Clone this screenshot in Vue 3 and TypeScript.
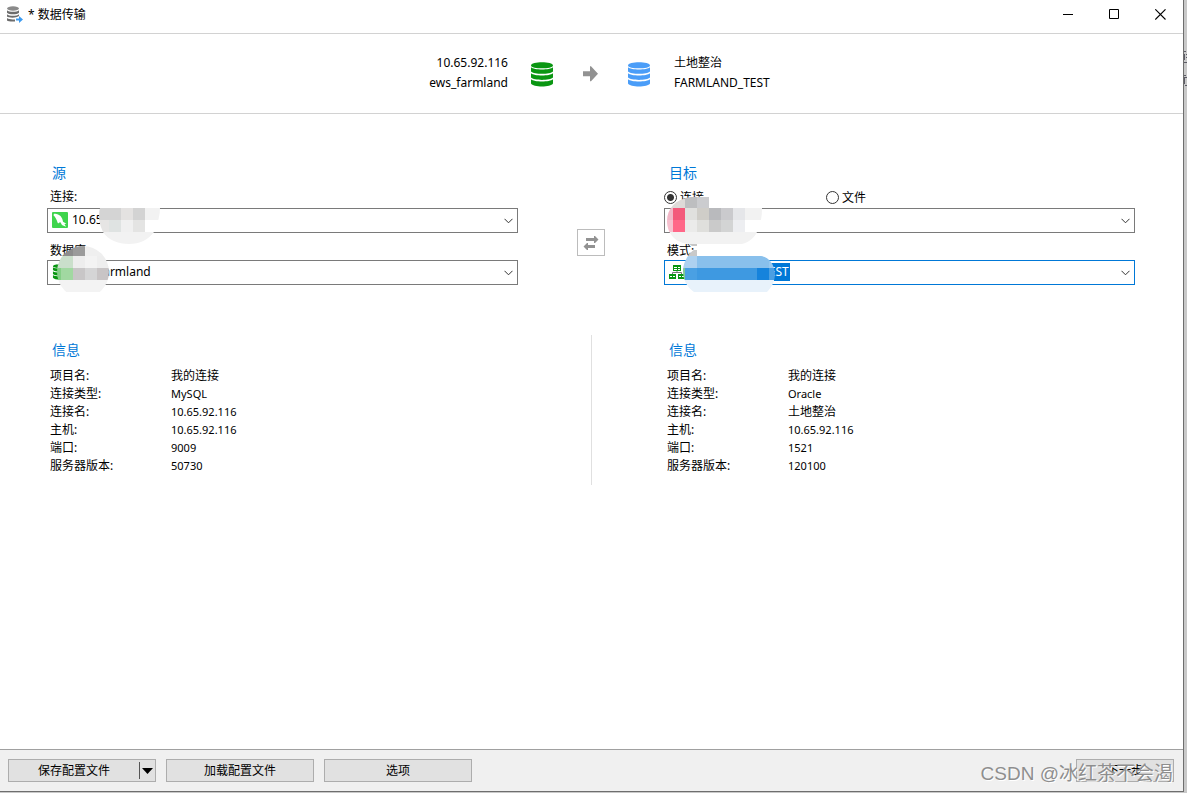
<script setup lang="ts">
import { ref } from 'vue'

interface Tile { x: number; y: number; w: number; h: number; c: string }
interface InfoRow { label: string; value: string; cjk?: boolean }

const tile = (x: number, y: number, w: number, h: number, c: string): Tile => ({ x, y, w, h, c })

const sourceInfo: InfoRow[] = [
  { label: '项目名:', value: '我的连接', cjk: true },
  { label: '连接类型:', value: 'MySQL' },
  { label: '连接名:', value: '10.65.92.116' },
  { label: '主机:', value: '10.65.92.116' },
  { label: '端口:', value: '9009' },
  { label: '服务器版本:', value: '50730' },
]
const targetInfo: InfoRow[] = [
  { label: '项目名:', value: '我的连接', cjk: true },
  { label: '连接类型:', value: 'Oracle' },
  { label: '连接名:', value: '土地整治', cjk: true },
  { label: '主机:', value: '10.65.92.116' },
  { label: '端口:', value: '1521' },
  { label: '服务器版本:', value: '120100' },
]

const maskConnection: Tile[] = [
  tile(0, 0, 22, 12, '#d4d4d4'), tile(22, 0, 12, 12, '#e4e2e1'), tile(34, 0, 12, 12, '#d3d3d3'), tile(46, 0, 16, 12, '#f2f2f2'),
  tile(0, 12, 10, 12, '#e6e5e4'), tile(10, 12, 12, 12, '#dfe3e2'), tile(22, 12, 12, 12, '#f0f0f0'), tile(34, 12, 12, 12, '#e4e4e3'), tile(46, 12, 16, 12, '#ffffff'),
  tile(0, 24, 62, 12, '#f2f2f2'),
]
const maskDatabase: Tile[] = [
  tile(0, 0, 16, 10, '#8d8d8d'), tile(16, 0, 12, 10, '#9b9b9b'), tile(28, 0, 24, 10, '#efefef'),
  tile(0, 10, 16, 12, '#cadfcb'), tile(16, 10, 12, 12, '#ededed'), tile(28, 10, 12, 12, '#f3f3f3'), tile(40, 10, 12, 12, '#eeeeee'),
  tile(0, 22, 4, 12, '#84cf86'), tile(4, 22, 12, 12, '#a1d8a1'), tile(16, 22, 12, 12, '#c8c6c7'), tile(28, 22, 12, 12, '#d5d5d6'), tile(40, 22, 12, 12, '#c8c4c5'),
  tile(0, 34, 52, 12, '#f3f3f3'),
]
const maskTarget: Tile[] = [
  tile(0, 0, 18, 11, '#dedad8'), tile(18, 0, 12, 11, '#bdbec0'), tile(30, 0, 12, 11, '#cbcccf'),
  tile(0, 11, 6, 12, '#f1b7c7'), tile(6, 11, 12, 12, '#f35a7b'), tile(18, 11, 12, 12, '#e0e0de'), tile(30, 11, 12, 12, '#cfcdc8'),
  tile(42, 11, 12, 12, '#b9babd'), tile(54, 11, 12, 12, '#cacacd'), tile(66, 11, 12, 12, '#e5e6e9'), tile(78, 11, 18, 12, '#f2f2f2'),
  tile(0, 23, 6, 12, '#f6c1cf'), tile(6, 23, 12, 12, '#ff6788'), tile(18, 23, 12, 12, '#ebebea'), tile(30, 23, 12, 12, '#dfdfdc'),
  tile(42, 23, 12, 12, '#cacaca'), tile(54, 23, 12, 12, '#d3d4d4'), tile(66, 23, 12, 12, '#edeef1'), tile(78, 23, 18, 12, '#ffffff'),
  tile(0, 35, 96, 12, '#f2f2f2'),
]
const maskSchema: Tile[] = [
  tile(0, 6, 14, 6, '#c8c9ca'),
  tile(0, 12, 14, 12, '#add1f0'), tile(14, 12, 72, 12, '#89c0ec'), tile(86, 12, 8, 12, '#99c9ef'),
  tile(0, 24, 2, 12, '#83c89b'), tile(2, 24, 12, 12, '#4aa0e3'), tile(14, 24, 60, 12, '#3e99e1'), tile(74, 24, 12, 12, '#1683dc'), tile(86, 24, 8, 12, '#4a9fe3'),
  tile(0, 36, 94, 12, '#e8f2fb'),
]

const targetKind = ref<'connection' | 'file'>('connection')
</script>

<template>
  <div class="window">
    <header class="titlebar">
      <svg width="16" height="17" viewBox="0 0 16 17">
        <ellipse cx="6" cy="2.5" rx="6" ry="2.2" fill="#8a8a8a" />
        <path d="M0 4.3c2 2 10 2 12 0v2.4c-2 2-10 2-12 0zM0 8.2c2 2 10 2 12 0v1.9c-1 .5-2 .9-3 1.2-3 .7-8 .3-9-.8zM0 12.1c1.6 1.3 5 1.7 8 1.3v2c-3 .5-7 0-8-.9z" fill="#6c6c6c" />
        <path d="M9 12.5h3v-2.6l4 3.7-4 3.4v-2.6H9z" fill="#3d9bf0" />
      </svg>
      <h1>* 数据传输</h1>
      <div class="window-buttons">
        <button type="button" aria-label="最小化"><svg width="11" height="11" viewBox="0 0 11 11"><path d="M0 5.5h10" stroke="#000" /></svg></button>
        <button type="button" aria-label="最大化"><svg width="11" height="11" viewBox="0 0 11 11"><path d="M.5.5h9v9h-9z" fill="none" stroke="#000" /></svg></button>
        <button type="button" aria-label="关闭"><svg width="11" height="11" viewBox="0 0 11 11"><path d="M.3.3l10.2 10.2M10.5.3L.3 10.5" stroke="#000" stroke-width="1.1" /></svg></button>
      </div>
    </header>

    <section class="summary">
      <p class="summary-from">10.65.92.116<br>ews_farmland</p>
      <div class="summary-icons">
        <svg class="green" width="22" height="25" viewBox="0 0 22 25">
          <path d="M0 3.5C0-.9 22-.9 22 3.5 22 7.3 0 7.3 0 3.5zM0 5.2c3 3 19 3 22 0v4.2c-3 3.2-19 3.2-22 0zM0 11.3c3 3 19 3 22 0v4.2c-3 3.2-19 3.2-22 0zM0 17.3c3 3 19 3 22 0v4.2c-2 4-20 4-22 0z" />
        </svg>
        <svg width="15" height="16" viewBox="0 0 15 16"><path d="M0 5.3h7V.3h1l7 7.5-7 7.5H7v-5H0z" fill="#929292" /></svg>
        <svg class="blue" width="22" height="25" viewBox="0 0 22 25">
          <path d="M0 3.5C0-.9 22-.9 22 3.5 22 7.3 0 7.3 0 3.5zM0 5.2c3 3 19 3 22 0v4.2c-3 3.2-19 3.2-22 0zM0 11.3c3 3 19 3 22 0v4.2c-3 3.2-19 3.2-22 0zM0 17.3c3 3 19 3 22 0v4.2c-2 4-20 4-22 0z" />
        </svg>
      </div>
      <p class="summary-to">土地整治<br>FARMLAND_TEST</p>
    </section>

    <main>
      <div class="endpoints">
        <section>
          <h2>源</h2>
          <label class="field-label" for="source-connection">连接:</label>
          <div class="field">
            <select id="source-connection"><option>10.65.92.116</option></select>
            <svg class="field-icon" width="16" height="16" viewBox="0 0 16 16">
              <rect width="16" height="16" rx="1" fill="#3fd44d" />
              <path d="M2 1.8c2-.5 5 .4 6.500 2.300 1.600 1.800 2.200 3.800 2.500 5.700l3.400 2-2 .3 1.700 2.600-3.700-1.500c-.9-.7-1.200-1.800-1.800-2.800-.6-.4-1.200-.2-1.700.7-.7.5-1.300-.1-1.500-1.200C4.700 7.600 3.400 5.200 1.500 3.200z" fill="#fff" />
            </svg>
            <svg class="chevron" width="9" height="6" viewBox="0 0 9 6"><path d="M.5.8l4 4 4-4" /></svg>
            <svg class="mask mask-connection" width="62" height="36" viewBox="0 0 62 36">
              <clipPath id="clip-connection"><path d="M1 0h60c0 7-2 15-6 24-6 8-14 12-25 12S9 32 4 24C0 16-1 7 1 0z" /></clipPath>
              <g clip-path="url(#clip-connection)" shape-rendering="crispEdges">
                <rect v-for="(t, i) in maskConnection" :key="i" :x="t.x" :y="t.y" :width="t.w" :height="t.h" :fill="t.c" />
              </g>
            </svg>
          </div>
          <label class="field-label second" for="source-database">数据库:</label>
          <div class="field">
            <select id="source-database"><option>ews_farmland</option></select>
            <svg class="field-icon green" width="16" height="16" viewBox="0 0 22 25">
              <path d="M0 3.5C0-.9 22-.9 22 3.5 22 7.3 0 7.3 0 3.5zM0 5.2c3 3 19 3 22 0v4.2c-3 3.2-19 3.2-22 0zM0 11.3c3 3 19 3 22 0v4.2c-3 3.2-19 3.2-22 0zM0 17.3c3 3 19 3 22 0v4.2c-2 4-20 4-22 0z" />
            </svg>
            <svg class="chevron" width="9" height="6" viewBox="0 0 9 6"><path d="M.5.8l4 4 4-4" /></svg>
            <svg class="mask mask-database" width="52" height="46" viewBox="0 0 52 46">
              <clipPath id="clip-database"><circle cx="26" cy="26" r="26" /></clipPath>
              <g clip-path="url(#clip-database)" shape-rendering="crispEdges">
                <rect v-for="(t, i) in maskDatabase" :key="i" :x="t.x" :y="t.y" :width="t.w" :height="t.h" :fill="t.c" />
              </g>
            </svg>
          </div>
        </section>

        <button class="swap" type="button" aria-label="交换">
          <svg width="16" height="16" viewBox="0 0 16 16"><path d="M3 3h8V1h1l3.500 3.500L12 8h-1V6H3zM12 13H5v2H4L.5 11.500 4 8h1v2h7z" fill="#929292" /></svg>
        </button>

        <section>
          <h2>目标</h2>
          <div class="radios">
            <label><input v-model="targetKind" type="radio" name="target-kind" value="connection">连接</label>
            <label><input v-model="targetKind" type="radio" name="target-kind" value="file">文件</label>
          </div>
          <div class="field">
            <select aria-label="目标连接"><option>土地整治</option></select>
            <svg class="chevron" width="9" height="6" viewBox="0 0 9 6"><path d="M.5.8l4 4 4-4" /></svg>
            <svg class="mask mask-target" width="96" height="50" viewBox="0 0 96 50">
              <clipPath id="clip-target"><path d="M24 0h18v11h53c0 8-1 16-5 24-3 6-8 10-15 12H24C8 47 0 36 0 24S8 2 24 0z" /></clipPath>
              <g clip-path="url(#clip-target)" shape-rendering="crispEdges">
                <rect v-for="(t, i) in maskTarget" :key="i" :x="t.x" :y="t.y" :width="t.w" :height="t.h" :fill="t.c" />
              </g>
              <path d="M22 47h8v2h-5z" fill="#c6c6c6" />
            </svg>
          </div>
          <label class="field-label second" for="target-schema">模式:</label>
          <div class="field">
            <select id="target-schema" class="active"><option>FARMLAND_TEST</option></select>
            <svg class="field-icon" width="16" height="16" viewBox="0 0 16 16">
              <path d="M4 1h8v6H4zM0 10h7v5H0zM9 10h7v5H9z" fill="#0a9612" />
              <path d="M5 3h3v1H5zM9 3h2v1H9zM5 5h3v1H5zM9 5h2v1H9zM1 12h2v1H1zM4 12h2v1H4zM10 12h2v1h-2zM13 12h2v1h-2z" fill="#fff" />
              <path d="M8 7v1.5M3.5 10V8.500h9V10" fill="none" stroke="#777" />
            </svg>
            <svg class="chevron" width="9" height="6" viewBox="0 0 9 6"><path d="M.5.8l4 4 4-4" /></svg>
            <svg class="mask mask-schema" width="94" height="48" viewBox="0 0 94 48">
              <rect x="14" y="1" width="14" height="11" fill="#fff" />
              <clipPath id="clip-schema"><path d="M14 4v8h64c8 1 13 8 14 17 0 8-3 14-8 19H11C4 43 0 36 0 27S6 8 14 4z" /></clipPath>
              <g clip-path="url(#clip-schema)" shape-rendering="crispEdges">
                <rect v-for="(t, i) in maskSchema" :key="i" :x="t.x" :y="t.y" :width="t.w" :height="t.h" :fill="t.c" />
              </g>
            </svg>
          </div>
        </section>
      </div>

      <div class="details">
        <section class="info">
          <h2>信息</h2>
          <dl>
            <template v-for="row in sourceInfo" :key="row.label"><dt>{{ row.label }}</dt><dd :class="{ cjk: row.cjk }">{{ row.value }}</dd></template>
          </dl>
        </section>
        <div class="divider"></div>
        <section class="info">
          <h2>信息</h2>
          <dl>
            <template v-for="row in targetInfo" :key="row.label"><dt>{{ row.label }}</dt><dd :class="{ cjk: row.cjk }">{{ row.value }}</dd></template>
          </dl>
        </section>
      </div>
    </main>

    <footer>
      <div class="split">
        <button class="split-main" type="button">保存配置文件</button>
        <button class="split-arrow" type="button" aria-label="更多保存选项"><svg width="11" height="6" viewBox="0 0 11 6"><path d="M0 0h11L5.500 6z" /></svg></button>
      </div>
      <button class="push" type="button">加载配置文件</button>
      <button class="push" type="button">选项</button>
      <button class="push next" type="button">下一步</button>
      <span class="watermark">CSDN @冰红茶不会渴</span>
    </footer>

    <svg class="backdrop" width="3" height="36" viewBox="0 0 3 36" shape-rendering="crispEdges">
      <path d="M0 0h2v1H0zM0 3h1v6H0zM2 3h1v1H2zM2 6h1v1H2zM0 11h3v1H0zM0 24h2v1H0zM0 26h3v1H0zM0 27h1v6H0zM1 34h2v1H1z" fill="#5c5c66" />
    </svg>
  </div>
</template>

<style>
body {
  margin: 0;
  background: #c9c9c9;
}
</style>

<style scoped>
* {
  box-sizing: border-box;
}
.window {
  position: relative;
  display: flex;
  flex-direction: column;
  min-height: calc(100vh - 1px);
  margin: 0 3px 1px 0;
  border-right: 1px solid #6e6e6e;
  border-bottom: 1px solid #6e6e6e;
  background: #fff;
  color: #000;
  font: 12px/18px "Noto Sans", "Noto Sans CJK SC", sans-serif;
}
.backdrop {
  position: absolute;
  left: calc(100% + 1px);
  top: 51px;
}
h1, h2, p, dl, dd {
  margin: 0;
  font-weight: 400;
}
button, select, input {
  font: inherit;
  color: inherit;
}
svg {
  display: block;
}
.titlebar {
  display: flex;
  align-items: center;
  height: 34px;
  padding: 0 0 5px 7px;
  border-bottom: 1px solid #d2d2d2;
}
h1 {
  padding-top: 2px;
  margin-left: 5px;
  font-size: 12px;
}
.window-buttons {
  display: flex;
  margin-left: auto;
}
.window-buttons button {
  display: grid;
  place-items: center;
  width: 46px;
  height: 28px;
  padding: 0;
  border: 0;
  background: none;
}
.summary {
  display: grid;
  grid-template-columns: 1fr auto 1fr;
  align-items: center;
  height: 80px;
  padding: 0 1px 2px 0;
  border-bottom: 1px solid #d2d2d2;
  line-height: 20px;
}
.summary-from {
  text-align: right;
}
.summary-icons {
  display: flex;
  align-items: center;
  gap: 30px;
  padding: 3px 24px 0 23px;
}
.green {
  fill: #0a9612;
}
.blue {
  fill: #4a9df8;
}
main {
  flex: 1;
  padding: 49px 48px 0 47px;
}
.endpoints, .details {
  display: grid;
  grid-template-columns: 1fr 146px 1fr;
}
h2 {
  padding-left: 5px;
  color: #0078d7;
  font-size: 14px;
  line-height: 20px;
}
.field-label {
  display: block;
  height: 25px;
  padding: 5px 3px 0;
}
.field-label.second {
  height: 27px;
  padding-top: 9px;
}
.field {
  position: relative;
}
select {
  display: block;
  width: 100%;
  height: 25px;
  padding: 0 24px 2px 24px;
  border: 1px solid #7a7a7a;
  border-radius: 0;
  outline: 0;
  background: #fff;
  appearance: none;
}
select.active {
  padding-left: 28px;
  border-color: #0078d7;
  color: #fff;
  background: linear-gradient(#0078d7, #0078d7) 23px 2px / 102px 18px no-repeat #fff;
}
.field-icon, .chevron, .mask {
  position: absolute;
  pointer-events: none;
}
.field-icon {
  left: 5px;
  top: 4px;
}
.chevron {
  right: 5px;
  top: 10px;
  fill: none;
  stroke: #333;
}
.mask {
  z-index: 1;
}
.mask-connection {
  left: 52px;
  top: 0;
}
.mask-database {
  left: 10px;
  top: -14px;
}
.mask-target {
  left: 3px;
  top: -11px;
}
.mask-schema {
  left: 19px;
  top: -16px;
}
.swap {
  display: grid;
  place-items: center;
  place-self: start center;
  width: 28px;
  height: 27px;
  margin-top: 66px;
  padding: 0;
  border: 1px solid #bcbcbc;
  background: #fff;
}
.radios {
  display: grid;
  grid-template-columns: 162px auto;
  height: 25px;
  padding-top: 5px;
}
.radios label {
  display: flex;
  align-items: center;
  gap: 3px;
  height: 19px;
}
.radios input {
  width: 13px;
  height: 13px;
  margin: 0;
  border: 1px solid #333;
  border-radius: 50%;
  background: #fff;
  appearance: none;
}
.radios input:checked {
  background: radial-gradient(circle, #333 0 3px, #fff 4px);
}
.details {
  margin-top: 50px;
}
.divider {
  justify-self: center;
  width: 1px;
  height: 150px;
  background: #e0e0e0;
}
.info {
  padding-top: 5px;
}
dl {
  display: grid;
  grid-template-columns: 121px 1fr;
  grid-auto-rows: 18px;
  margin-top: 7px;
  padding-left: 3px;
}
dd {
  font-size: 11px;
}
dd.cjk {
  font-size: 12px;
}
footer {
  position: relative;
  display: flex;
  gap: 10px;
  height: 42px;
  padding: 9px 9px 0 8px;
  border-top: 1px solid #a0a0a0;
  background: #f0f0f0;
}
.push, .split {
  width: 148px;
  height: 23px;
  border: 1px solid #adadad;
  background: #e1e1e1;
}
.push {
  padding: 0;
}
.split {
  display: flex;
  align-items: center;
}
.split button {
  display: grid;
  place-items: center;
  height: 17px;
  padding: 0;
  border: 0;
  background: none;
}
.split .split-main {
  flex: 1;
}
.split .split-arrow {
  width: 16px;
  border-left: 1px solid #555;
}
.push.next {
  width: 98px;
  margin-left: auto;
}
.watermark {
  position: absolute;
  right: 10px;
  bottom: 4px;
  color: #8e8e8e;
  font: 19px/26px "Liberation Sans", "Noto Sans CJK SC", sans-serif;
  text-shadow: 1px 1px 0 #fff;
  white-space: nowrap;
  pointer-events: none;
}
</style>
